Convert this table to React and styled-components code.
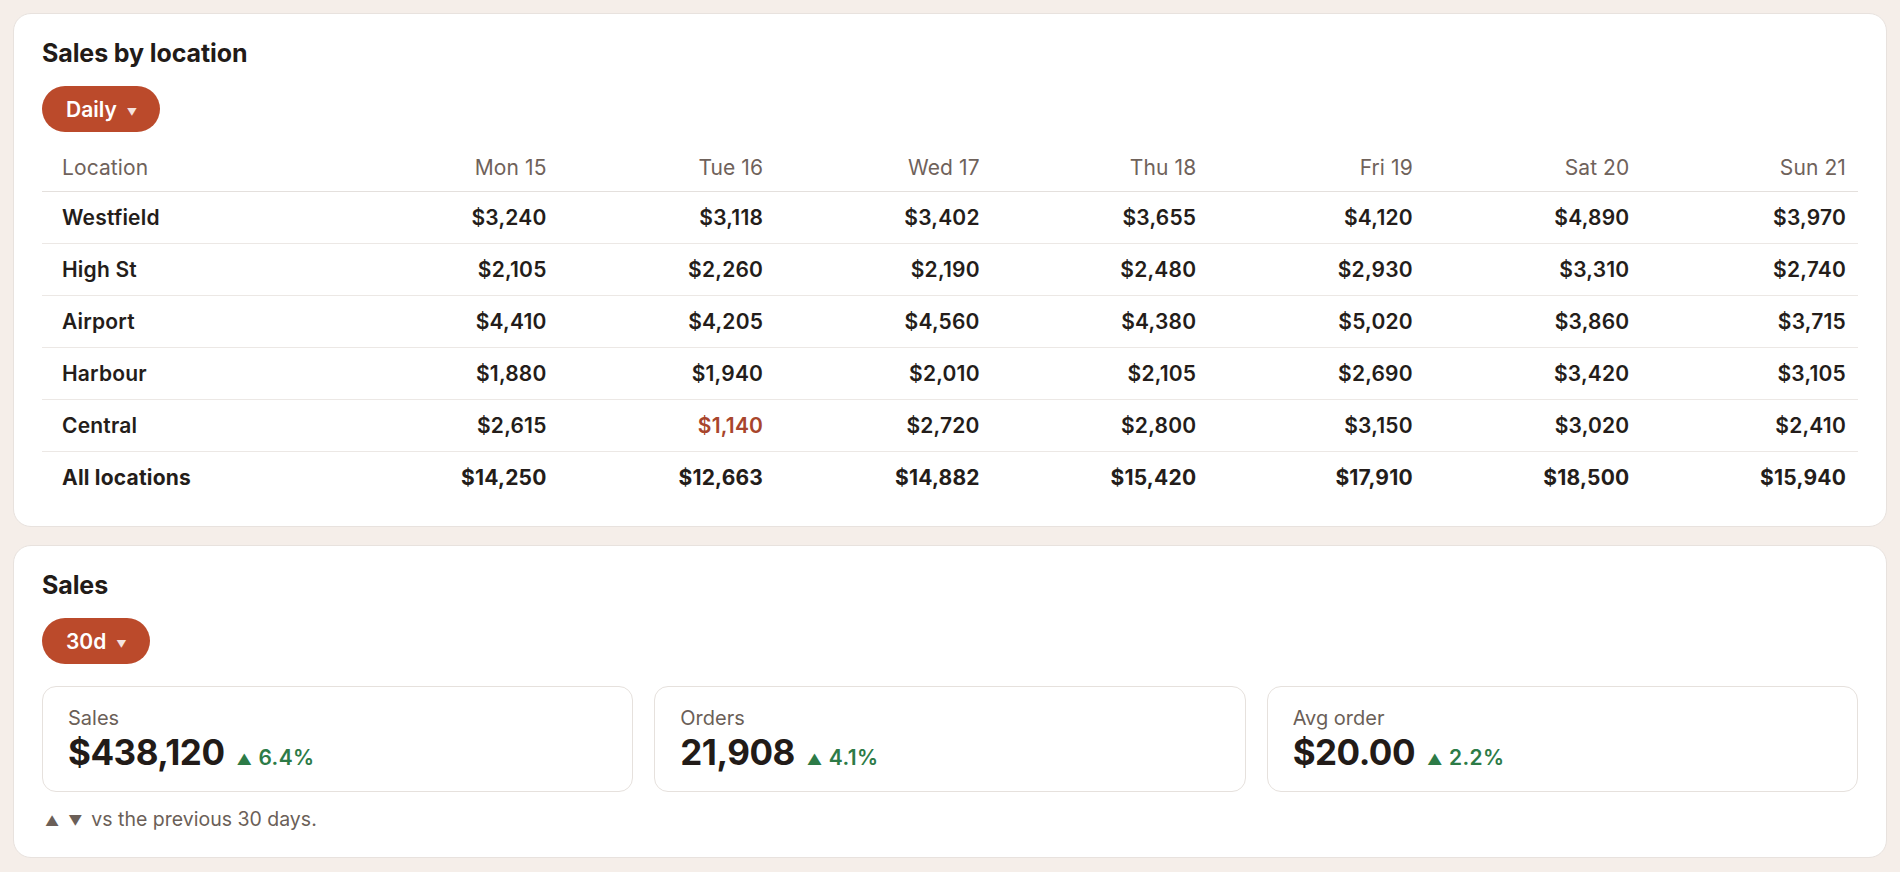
import React from "react";
import styled, { createGlobalStyle } from "styled-components";

const Global = createGlobalStyle`
  html, body { margin: 0; padding: 0; background: #f5eee9; }
  body { font-family: Inter, "Noto Sans", sans-serif; color: #241d1a; }
  * { box-sizing: border-box; }
`;

const Page = styled.div`
  display: flex;
  flex-direction: column;
  gap: 18px;
  padding: 13px 13px 17px 13px;
`;

const Card = styled.section`
  background: #fff;
  border: 1px solid #e8e2de;
  border-radius: 18px;
  padding: 24px 28px ${(p) => (p.$tall ? "26px" : "23px")} 28px;
`;

const Title = styled.h2`
  margin: 0 0 18px 0;
  font-size: 25px;
  line-height: 30px;
  font-weight: 700;
  letter-spacing: -0.1px;
  color: #221b18;
`;

const Pill = styled.button`
  display: inline-flex;
  align-items: center;
  gap: 10px;
  height: 46px;
  padding: 0 23px 0 24px;
  border: none;
  border-radius: 23px;
  background: #bb4a2b;
  color: #fff;
  font-family: inherit;
  font-size: 21px;
  font-weight: 600;
`;

const Caret = styled.span`
  font-size: 10px;
  opacity: 0.85;
  margin-top: 6px;
`;

const Table = styled.table`
  width: 100%;
  margin-top: 13px;
  border-collapse: collapse;
  table-layout: fixed;
  font-size: 21px;
`;

const Th = styled.th`
  font-weight: 400;
  color: #6f625b;
  text-align: ${(p) => (p.$first ? "left" : "right")};
  padding: ${(p) => (p.$first ? "0 0 0 20px" : "0 12px 0 0")};
  height: 46px;
  border-bottom: 1.5px solid #e4e0dd;
  width: ${(p) => (p.$first ? "300px" : "auto")};
  letter-spacing: 0.1px;
`;

const Tr = styled.tr`
  border-bottom: ${(p) => (p.$last ? "none" : "1.5px solid #ece8e5")};
`;

const Td = styled.td`
  height: 52px;
  font-weight: ${(p) => (p.$last ? 700 : 600)};
  color: ${(p) => (p.$alert ? "#a8452c" : "#241d1a")};
  text-align: ${(p) => (p.$first ? "left" : "right")};
  padding: ${(p) => (p.$first ? "0 0 0 20px" : "0 12px 0 0")};
  letter-spacing: 0.2px;
`;

const KpiRow = styled.div`
  display: grid;
  grid-template-columns: repeat(3, 1fr);
  gap: 21px;
  margin-top: 22px;
`;

const Kpi = styled.div`
  border: 1.5px solid #e6e1dd;
  border-radius: 14px;
  padding: 19px 26px 19px 25px;
  height: 106px;
`;

const KpiLabel = styled.div`
  font-size: 20px;
  line-height: 24px;
  color: #6b5f58;
`;

const KpiLine = styled.div`
  display: flex;
  align-items: baseline;
  gap: 12px;
  margin-top: 1px;
`;

const KpiValue = styled.span`
  font-size: 35px;
  line-height: 42px;
  font-weight: 700;
  letter-spacing: -0.5px;
  color: #221b18;
`;

const Delta = styled.span`
  font-size: 21px;
  font-weight: 600;
  letter-spacing: 0.4px;
  color: #2d7b47;
`;

const Tri = styled.span`
  font-size: 15px;
  margin-right: 6px;
`;

const Note = styled.p`
  margin: 15px 0 0 3px;
  font-size: 19.5px;
  color: #6b5f58;
`;

const NoteTri = styled.span`
  font-size: 14px;
  margin-right: 9px;
`;

const days = ["Mon 15", "Tue 16", "Wed 17", "Thu 18", "Fri 19", "Sat 20", "Sun 21"];
const rows = [
  ["Westfield", ["$3,240", "$3,118", "$3,402", "$3,655", "$4,120", "$4,890", "$3,970"]],
  ["High St", ["$2,105", "$2,260", "$2,190", "$2,480", "$2,930", "$3,310", "$2,740"]],
  ["Airport", ["$4,410", "$4,205", "$4,560", "$4,380", "$5,020", "$3,860", "$3,715"]],
  ["Harbour", ["$1,880", "$1,940", "$2,010", "$2,105", "$2,690", "$3,420", "$3,105"]],
  ["Central", ["$2,615", "$1,140", "$2,720", "$2,800", "$3,150", "$3,020", "$2,410"], 1],
  ["All locations", ["$14,250", "$12,663", "$14,882", "$15,420", "$17,910", "$18,500", "$15,940"]],
];

const kpis = [
  ["Sales", "$438,120", "6.4%"],
  ["Orders", "21,908", "4.1%"],
  ["Avg order", "$20.00", "2.2%"],
];

export default function App() {
  return (
    <>
      <Global />
      <Page>
        <Card>
          <Title>Sales by location</Title>
          <Pill>
            Daily <Caret>▼</Caret>
          </Pill>
          <Table>
            <thead>
              <tr>
                <Th $first>Location</Th>
                {days.map((d) => (
                  <Th key={d}>{d}</Th>
                ))}
              </tr>
            </thead>
            <tbody>
              {rows.map(([name, vals, alertIdx], i) => {
                const last = i === rows.length - 1;
                return (
                  <Tr key={name} $last={last}>
                    <Td $first $last={last}>{name}</Td>
                    {vals.map((v, j) => (
                      <Td key={j} $last={last} $alert={alertIdx === j}>
                        {v}
                      </Td>
                    ))}
                  </Tr>
                );
              })}
            </tbody>
          </Table>
        </Card>
        <Card $tall>
          <Title>Sales</Title>
          <Pill>
            30d <Caret>▼</Caret>
          </Pill>
          <KpiRow>
            {kpis.map(([l, v, d]) => (
              <Kpi key={l}>
                <KpiLabel>{l}</KpiLabel>
                <KpiLine>
                  <KpiValue>{v}</KpiValue>
                  <Delta>
                    <Tri>▲</Tri>
                    {d}
                  </Delta>
                </KpiLine>
              </Kpi>
            ))}
          </KpiRow>
          <Note>
            <NoteTri>▲</NoteTri>
            <NoteTri>▼</NoteTri>vs the previous 30 days.
          </Note>
        </Card>
      </Page>
    </>
  );
}
